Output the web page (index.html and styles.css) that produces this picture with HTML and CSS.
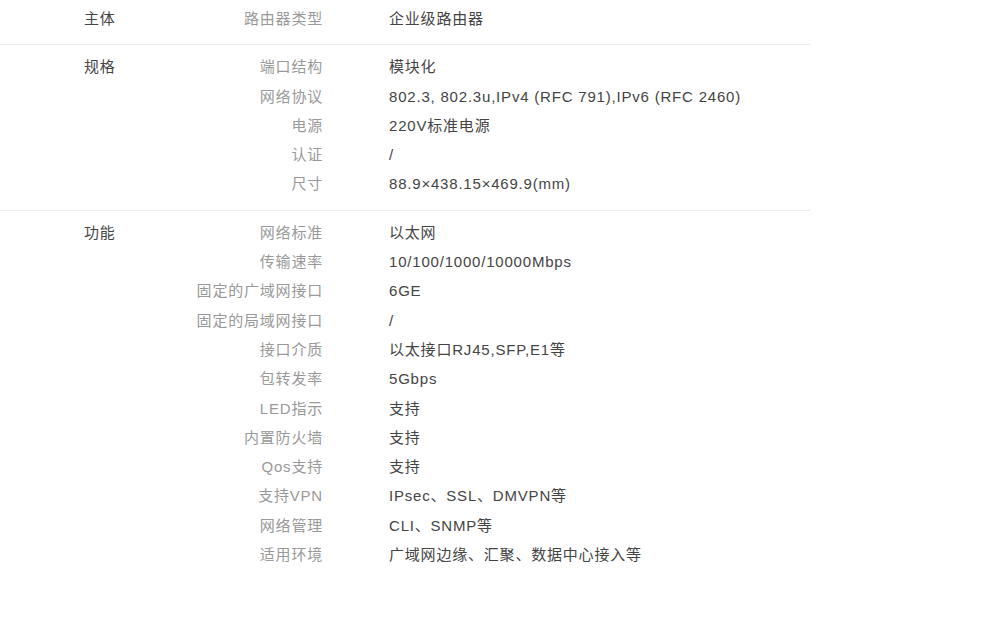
FILE: index.html
```html
<!DOCTYPE html>
<html lang="zh-CN">
<head>
    <meta charset="UTF-8">
    <meta name="viewport" content="width=device-width, initial-scale=1.0">
    <title>企业级路由器 参数</title>
    <link rel="stylesheet" href="styles.css">
</head>
<body>
    <div class="params">
        <div class="group group-first">
            <div class="group-name">主体</div>
            <dl class="rows">
                <dt>路由器类型</dt><dd>企业级路由器</dd>
            </dl>
        </div>

        <div class="group">
            <div class="group-name">规格</div>
            <dl class="rows">
                <dt>端口结构</dt><dd>模块化</dd>
                <dt>网络协议</dt><dd>802.3, 802.3u,IPv4 (RFC 791),IPv6 (RFC 2460)</dd>
                <dt>电源</dt><dd>220V标准电源</dd>
                <dt>认证</dt><dd>/</dd>
                <dt>尺寸</dt><dd>88.9×438.15×469.9(mm)</dd>
            </dl>
        </div>

        <div class="group group-last">
            <div class="group-name">功能</div>
            <dl class="rows">
                <dt>网络标准</dt><dd>以太网</dd>
                <dt>传输速率</dt><dd>10/100/1000/10000Mbps</dd>
                <dt>固定的广域网接口</dt><dd>6GE</dd>
                <dt>固定的局域网接口</dt><dd>/</dd>
                <dt>接口介质</dt><dd>以太接口RJ45,SFP,E1等</dd>
                <dt>包转发率</dt><dd>5Gbps</dd>
                <dt>LED指示</dt><dd>支持</dd>
                <dt>内置防火墙</dt><dd>支持</dd>
                <dt>Qos支持</dt><dd>支持</dd>
                <dt>支持VPN</dt><dd>IPsec、SSL、DMVPN等</dd>
                <dt>网络管理</dt><dd>CLI、SNMP等</dd>
                <dt>适用环境</dt><dd>广域网边缘、汇聚、数据中心接入等</dd>
            </dl>
        </div>
    </div>
</body>
</html>
```

FILE: styles.css
```css
body {
    margin: 0;
    background-color: #fff;
    font-family: "Liberation Sans", Arial, "Noto Sans CJK SC", sans-serif;
    font-size: 15px;
    color: #444;
}

.params {
    width: 810px;
}

.group {
    display: flex;
    padding: 7px 0 11px;
    border-bottom: 1px solid #ececec;
    line-height: 29.3px;
    letter-spacing: 0.8px;
}

.group-first {
    padding-top: 4px;
}

.group-last {
    border-bottom: none;
}

.group-name {
    width: 84px;
    padding-left: 84px;
    color: #444;
}

.rows {
    display: grid;
    grid-template-columns: 155px auto;
    column-gap: 66px;
    margin: 0;
}

.rows dt {
    text-align: right;
    color: #999;
}

.rows dd {
    margin: 0;
    color: #444;
}
```
